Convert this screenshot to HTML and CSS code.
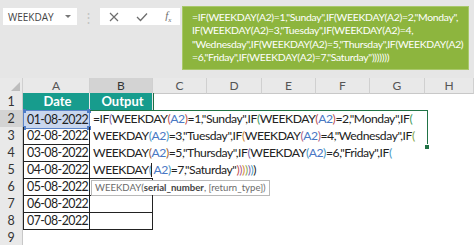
FILE: index.html
```html
<!DOCTYPE html>
<html lang="en">
<head>
    <meta charset="UTF-8">
    <meta name="viewport" content="width=device-width, initial-scale=1.0">
    <title>WEEKDAY formula</title>
    <link rel="stylesheet" href="styles.css">
</head>
<body>
    <div class="toolbar">
        <div class="name-box">
            <span>WEEKDAY</span>
            <span class="arrow"></span>
        </div>
        <div class="grip">&#8942;</div>
        <div class="fx-box">
            <svg width="10" height="10" viewBox="0 0 10 10"><path d="M1 1 L9 9 M9 1 L1 9" stroke="#6d6d6d" stroke-width="1.2" fill="none"/></svg>
            <svg width="12" height="10" viewBox="0 0 12 10"><path d="M1 5 L4.5 8.5 L11 1.5" stroke="#6d6d6d" stroke-width="1.3" fill="none"/></svg>
            <span class="fx">f<sub>x</sub></span>
        </div>
        <div class="formula-note">
            =IF(WEEKDAY(A2)=1,"Sunday",IF(WEEKDAY(A2)=2,"Monday",<br>
            IF(WEEKDAY(A2)=3,"Tuesday",IF(WEEKDAY(A2)=4,<br>
            "Wednesday",IF(WEEKDAY(A2)=5,"Thursday",IF(WEEKDAY(A2)<br>
            =6,"Friday",IF(WEEKDAY(A2)=7,"Saturday")))))))
        </div>
    </div>

    <div class="sheet">
        <div class="row head-row">
            <div class="corner"><span class="tri"></span></div>
            <div class="col-head">A</div>
            <div class="col-head active">B</div>
            <div class="col-head">C</div>
            <div class="col-head">D</div>
            <div class="col-head">E</div>
            <div class="col-head">F</div>
            <div class="col-head">G</div>
            <div class="col-head">H</div>
        </div>

        <div class="row">
            <div class="row-head">1</div>
            <div class="cell title">Date</div>
            <div class="cell title">Output</div>
            <div class="rest first"></div>
        </div>

        <div class="row">
            <div class="row-head active">2</div>
            <div class="cell date ref">01-08-2022<i class="dot tl"></i><i class="dot tr"></i><i class="dot bl"></i><i class="dot br"></i></div>
            <div class="cell out">=IF<span class="p3">(</span>WEEKDAY<span class="p2">(</span><span class="ref-a">A2</span><span class="p2">)</span>=1,"Sunday",IF<span class="p4">(</span>WEEKDAY<span class="p2">(</span><span class="ref-a">A2</span><span class="p2">)</span>=2,"Monday",IF<span class="p4">(</span></div>
        </div>

        <div class="row">
            <div class="row-head">3</div>
            <div class="cell date">02-08-2022</div>
            <div class="cell out">WEEKDAY<span class="p7">(</span><span class="ref-a">A2</span><span class="p7">)</span>=3,"Tuesday",IF<span class="p6">(</span>WEEKDAY<span class="p5">(</span><span class="ref-a">A2</span><span class="p5">)</span>=4,"Wednesday",IF<span class="p8">(</span></div>
        </div>

        <div class="row">
            <div class="row-head">4</div>
            <div class="cell date">03-08-2022</div>
            <div class="cell out">WEEKDAY<span class="p9">(</span><span class="ref-a">A2</span><span class="p9">)</span>=5,"Thursday",IF<span class="p3">(</span>WEEKDAY<span class="p7">(</span><span class="ref-a">A2</span><span class="p7">)</span>=6,"Friday",IF<span class="p7">(</span></div>
        </div>

        <div class="row">
            <div class="row-head">5</div>
            <div class="cell date">04-08-2022</div>
            <div class="cell out">WEEKDAY<span class="p7">(</span><span class="caret"></span><span class="ref-a">A2</span><span class="p7">)</span>=7,"Saturday"<span class="p2">)</span><span class="p5">)</span><span class="p6">)</span><span class="p8">)</span><span class="p3">)</span><span class="p7">)</span>)</div>
        </div>

        <div class="row">
            <div class="row-head">6</div>
            <div class="cell date">05-08-2022</div>
            <div class="cell low">
                <div class="tip">WEEKDAY(<b>serial_number</b>, [return_type])</div>
            </div>
        </div>

        <div class="row">
            <div class="row-head">7</div>
            <div class="cell date">06-08-2022</div>
            <div class="cell"></div>
        </div>

        <div class="row">
            <div class="row-head">8</div>
            <div class="cell date">07-08-2022</div>
            <div class="cell"></div>
        </div>

        <div class="row">
            <div class="row-head">9</div>
        </div>

        <div class="edit-box"><i class="handle"></i></div>
    </div>
</body>
</html>
```

FILE: styles.css
```css
body {
    margin: 0;
    padding: 0;
    width: 474px;
    height: 245px;
    overflow: hidden;
    background: #fff;
    font-family: Lato, "Open Sans", sans-serif;
}

.toolbar {
    display: flex;
    align-items: flex-start;
    height: 78px;
    background-color: #e6e6e6;
    box-sizing: border-box;
    padding: 6px 0 0 3px;
}

.name-box {
    display: flex;
    align-items: center;
    justify-content: space-between;
    width: 74px;
    height: 17px;
    margin-top: 2px;
    padding: 0 6px 0 5px;
    box-sizing: border-box;
    background: #fff;
    font-family: "Open Sans", sans-serif;
    font-size: 10px;
    color: #444;
}

.arrow {
    width: 0;
    height: 0;
    border-left: 3px solid transparent;
    border-right: 3px solid transparent;
    border-top: 3px solid #777;
}

.grip {
    width: 23px;
    margin-top: 3px;
    text-align: center;
    color: #c3c3c3;
    font-size: 13px;
    line-height: 17px;
}

.fx-box {
    display: flex;
    align-items: center;
    justify-content: space-around;
    width: 80px;
    height: 17px;
    margin-top: 2px;
    background: #fff;
}

.fx {
    font-family: "Liberation Serif", serif;
    font-style: italic;
    font-size: 11px;
    color: #6d6d6d;
}

.fx sub {
    font-size: 7px;
}

.formula-note {
    width: 287px;
    height: 64px;
    margin-left: 2px;
    padding: 4px 0 0 9px;
    box-sizing: border-box;
    background-color: #8db53e;
    border: 1px solid #a9c86b;
    color: #fff;
    font-size: 10.4px;
    line-height: 13.3px;
    letter-spacing: -0.3px;
    white-space: nowrap;
}

.sheet {
    position: relative;
    display: flex;
    flex-direction: column;
    font-size: 12.4px;
    color: #222;
}

.row {
    display: grid;
    grid-template-columns: 23px 67px 63px 1fr;
    height: 17px;
    flex-shrink: 0;
}

.head-row {
    grid-template-columns: 23px 67px 63px 54px 55px 54px 54px 55px 1fr;
    height: 15px;
}

.corner {
    position: relative;
    background: #e9e9e9;
    border-right: 1px solid #d0d0d0;
    border-bottom: 1px solid #c8c8c8;
}

.tri {
    position: absolute;
    right: 2px;
    bottom: 2px;
    width: 0;
    height: 0;
    border-left: 9px solid transparent;
    border-bottom: 9px solid #bdbdbd;
}

.col-head {
    background: #e9e9e9;
    border-right: 1px solid #d0d0d0;
    border-bottom: 1px solid #c8c8c8;
    color: #555;
    text-align: center;
    font-size: 12px;
    line-height: 15px;
}

.col-head.active {
    background: #d3d3d3;
    color: #333;
}

.row-head {
    position: relative;
    z-index: 2;
    background: #e9e9e9;
    border-right: 1px solid #c8c8c8;
    color: #333;
    text-align: center;
    font-size: 12.5px;
    line-height: 17px;
}

.row-head.active {
    background: #d3d3d3;
}

.cell {
    position: relative;
    padding-left: 3px;
    line-height: 17px;
    border-right: 1px solid #222;
    border-bottom: 1px solid #222;
    white-space: nowrap;
    box-sizing: border-box;
}

.cell.title {
    background: #179c8d;
    color: #fff;
    font-weight: bold;
    font-size: 13px;
    text-align: center;
    border: none;
    border-right: 1px solid #e9e9e9;
}

.date {
    border-left: 1px solid #222;
    letter-spacing: -0.55px;
}

.cell.out {
    overflow: visible;
    z-index: 1;
    border-right: none;
    border-bottom: none;
    font-size: 12.2px;
    letter-spacing: -0.45px;
}

.cell.low {
    border-top: 1px solid #222;
}

.rest.first {
    border-left: 1px solid #1f6f46;
}

.ref {
    background: #c8d6ee;
    border: 1px solid #5b84c8;
}

.dot {
    position: absolute;
    width: 4px;
    height: 4px;
    background: #4d7bc6;
}

.dot.tl { left: -2px; top: -2px; }
.dot.tr { right: -2px; top: -2px; }
.dot.bl { left: -2px; bottom: -2px; }
.dot.br { right: -2px; bottom: -2px; }

.ref-a { color: #4a78c4; }
.p2 { color: #c0504d; }
.p3 { color: #7c5fa8; }
.p4 { color: #3e9b5c; }
.p5 { color: #b06086; }
.p6 { color: #d0883a; }
.p7 { color: #4a9ac4; }
.p8 { color: #86a84a; }
.p9 { color: #a05a2c; }

.caret {
    display: inline-block;
    width: 1px;
    height: 14px;
    margin: 0 1px -3px 0;
    background: #222;
}

.tip {
    position: absolute;
    left: 1px;
    top: 1px;
    height: 14px;
    padding: 0 3px;
    background: #fff;
    border: 1px solid #b9b9b9;
    color: #6a6a6a;
    font-size: 9.6px;
    line-height: 14px;
    white-space: nowrap;
}

.tip b {
    color: #444;
}

.edit-box {
    position: absolute;
    left: 90px;
    top: 32px;
    width: 337px;
    height: 36px;
    border-top: 1px solid #217346;
    border-right: 1px solid #217346;
    pointer-events: none;
}

.handle {
    position: absolute;
    right: -3px;
    bottom: -3px;
    width: 4px;
    height: 4px;
    background: #217346;
    border: 1px solid #fff;
}
```
